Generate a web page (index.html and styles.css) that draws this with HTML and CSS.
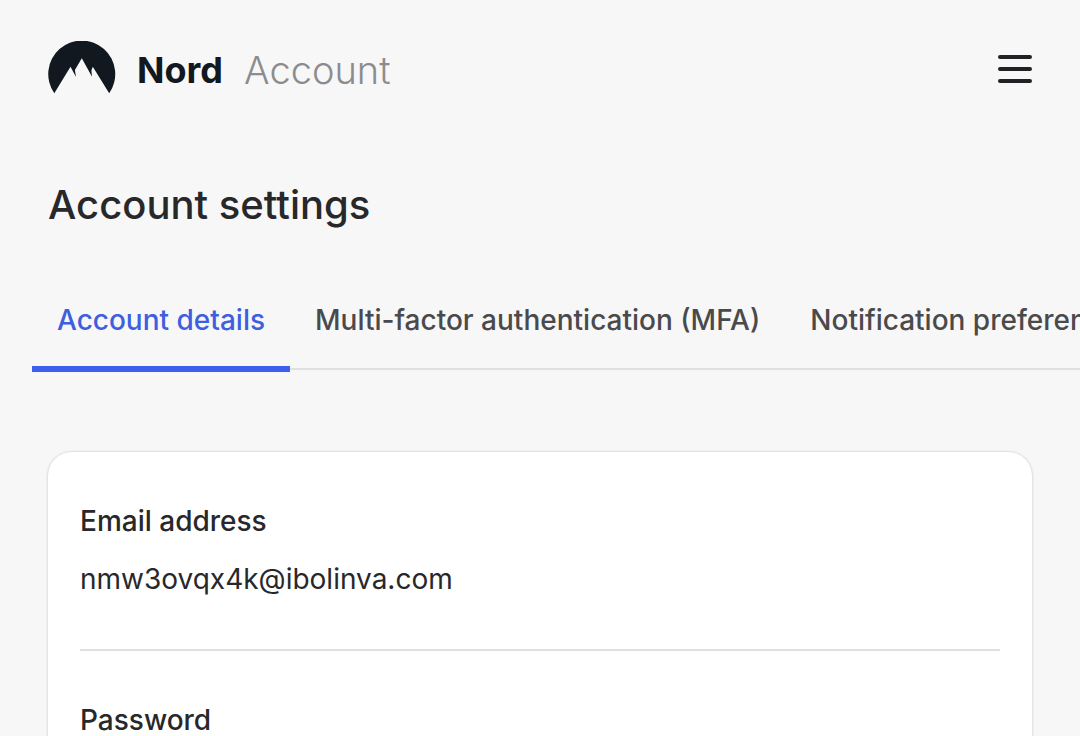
FILE: index.html
```html
<!DOCTYPE html>
<html lang="en">
<head>
  <meta charset="utf-8">
  <meta name="viewport" content="width=device-width, initial-scale=1">
  <title>Account settings</title>
  <link rel="stylesheet" href="styles.css">
</head>
<body>

  <header class="header">
    <a class="logo" href="#">
      <svg class="logo-mark" width="68" height="54" viewBox="0 0 68 54" aria-hidden="true">
        <path fill="#111820" d="M6.3 52.3A33.5 33.5 0 1 1 61.2 52.3L44.8 25.8L43.4 29.5L44 35.8L33.8 17.3L26.9 29L28 36L22.5 25.8Z"/>
      </svg>
      <span class="logo-name">Nord</span>
      <span class="logo-product">Account</span>
    </a>
    <button class="menu-button" type="button" aria-label="Menu">
      <svg width="34" height="28" viewBox="0 0 34 28" aria-hidden="true">
        <path d="M2 2H32M2 14H32M2 26H32" stroke="#222226" stroke-width="4" stroke-linecap="round"/>
      </svg>
    </button>
  </header>

  <main>
    <h1>Account settings</h1>

    <nav class="tabs">
      <a class="tab active" href="#">Account details</a>
      <a class="tab" href="#">Multi-factor authentication (MFA)</a>
      <a class="tab" href="#">Notification preferences</a>
    </nav>

    <section class="card">
      <div class="row">
        <h2>Email address</h2>
        <p>nmw3ovqx4k@ibolinva.com</p>
      </div>
      <div class="row">
        <h2>Password</h2>
      </div>
    </section>
  </main>

</body>
</html>
```

FILE: styles.css
```css
* {
  box-sizing: border-box;
}
html {
  scrollbar-width: none;
}
body {
  margin: 0;
  background: #f7f7f7;
  color: #28282b;
  font-family: Inter, "Liberation Sans", sans-serif;
  font-size: 28px;
  line-height: 40px;
}
.header {
  display: flex;
  align-items: center;
  justify-content: space-between;
  height: 136px;
  padding: 0 48px;
}
.logo {
  display: flex;
  align-items: center;
  color: #111820;
  font-size: 36px;
  text-decoration: none;
}
.logo-name {
  margin-left: 21px;
  padding-top: 4px;
  font-weight: 700;
}
.logo-product {
  margin-left: 21px;
  padding-top: 4px;
  color: #8c8c8e;
  font-size: 38px;
  font-weight: 300;
}
.menu-button {
  display: flex;
  padding: 2px 0 0;
  border: none;
  background: none;
  cursor: pointer;
}
h1 {
  margin: 41px 48px 0;
  font-size: 40px;
  font-weight: 500;
  line-height: 56px;
}
.tabs {
  display: flex;
  margin: 43px 0 0 32px;
  overflow: hidden;
  background: linear-gradient(#e0e0e0, #e0e0e0) 0 92px / 100% 2px no-repeat;
}
.tab {
  flex: none;
  height: 96px;
  padding: 24px 25px 0;
  border-bottom: 6px solid transparent;
  color: #4a4a4d;
  font-weight: 500;
  text-decoration: none;
}
.tab.active {
  border-bottom-color: #3e5fee;
  color: #3e5fde;
}
.card {
  margin: 80px 48px 48px;
  padding: 0 32px;
  background: #fff;
  border-radius: 24px;
  box-shadow: 0 0 2px 1px #dcdcdc;
}
.row {
  padding: 49px 0 50px;
}
.row + .row {
  border-top: 2px solid #e0e0e0;
}
h2 {
  margin: 0;
  font-size: 28px;
  font-weight: 500;
}
p {
  margin: 18px 0 0;
}
```
